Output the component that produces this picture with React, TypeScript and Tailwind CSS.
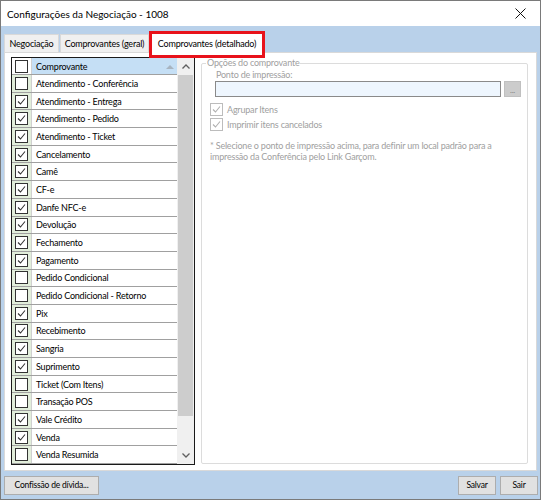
import React from 'react';

const rows: { label: string; checked: boolean }[] = [
  { label: 'Atendimento - Conferência', checked: false },
  { label: 'Atendimento - Entrega', checked: true },
  { label: 'Atendimento - Pedido', checked: true },
  { label: 'Atendimento - Ticket', checked: true },
  { label: 'Cancelamento', checked: true },
  { label: 'Camê', checked: true },
  { label: 'CF-e', checked: true },
  { label: 'Danfe NFC-e', checked: true },
  { label: 'Devolução', checked: true },
  { label: 'Fechamento', checked: true },
  { label: 'Pagamento', checked: true },
  { label: 'Pedido Condicional', checked: false },
  { label: 'Pedido Condicional - Retorno', checked: false },
  { label: 'Pix', checked: true },
  { label: 'Recebimento', checked: true },
  { label: 'Sangria', checked: true },
  { label: 'Suprimento', checked: true },
  { label: 'Ticket (Com Itens)', checked: false },
  { label: 'Transação POS', checked: false },
  { label: 'Vale Crédito', checked: true },
  { label: 'Venda', checked: true },
  { label: 'Venda Resumida', checked: false },
];

const CheckBox = ({ checked, disabled }: { checked: boolean; disabled?: boolean }) => (
  <div
    className={`w-[13px] h-[13px] border flex items-center justify-center ${
      disabled ? 'border-[#bcbcbc] bg-white' : 'border-[#333333] bg-white'
    }`}
  >
    {checked && (
      <svg width="9" height="9" viewBox="0 0 9 9">
        <path
          d="M1 4.5 L3.5 7 L8 1.5"
          fill="none"
          stroke={disabled ? '#b0b0b0' : '#333333'}
          strokeWidth="1.1"
        />
      </svg>
    )}
  </div>
);

const WinButton = ({ children, className = '' }: { children: React.ReactNode; className?: string }) => (
  <button
    className={`h-[19px] bg-[#e1e1e1] border border-[#adadad] text-[8.5px] text-black whitespace-nowrap flex items-center justify-center ${className}`}
  >
    {children}
  </button>
);

export default function App() {
  return (
    <div
      className="w-[541px] h-[500px] border border-[#7a7a7a] flex flex-col bg-white text-black text-[9px] tracking-[-0.2px] leading-none"
      style={{ fontFamily: 'Lato, "Noto Sans", sans-serif' }}
    >
      {/* Title bar */}
      <div className="h-[25px] bg-white flex items-center justify-between pl-[6px] pr-[14px]">
        <span className="text-[10px] tracking-normal">Configurações da Negociação - 1008</span>
        <svg width="11" height="11" viewBox="0 0 11 11">
          <path d="M0.5 0.5 L10.5 10.5 M10.5 0.5 L0.5 10.5" stroke="#111" strokeWidth="1" />
        </svg>
      </div>

      <div className="flex-1 bg-[#b9d1ea] flex flex-col">
        {/* Tabs */}
        <div className="h-[26px] flex items-end pl-[3px]">
          <div className="h-[18px] w-[55px] bg-[#f0f0f0] border border-b-0 border-[#d9d9d9] flex items-center justify-center whitespace-nowrap">
            Negociação
          </div>
          <div className="h-[18px] w-[89px] ml-[1px] bg-[#f0f0f0] border border-b-0 border-[#d9d9d9] flex items-center justify-center whitespace-nowrap">
            Comprovantes (geral)
          </div>
          <div className="relative z-10 -mb-[6px] h-[27px] w-[116px] border-[3px] border-[#e8121b] bg-white flex items-start justify-center pt-[5px] whitespace-nowrap">
            Comprovantes (detalhado)
          </div>
        </div>

        {/* Tab page */}
        <div className="h-[419px] mx-[3px] bg-white border border-[#d9d9d9] flex pt-[4px] pl-[6px] pr-[8px]">
          {/* List */}
          <div className="w-[184px] h-[408px] border border-[#1a1a1a] flex">
            <div className="flex-1 flex flex-col">
              <div className="h-[17px] flex border-b border-[#a0a0a0]">
                <div className="w-[20px] bg-white border-r border-[#d0d0d0] flex items-center justify-center">
                  <CheckBox checked={false} />
                </div>
                <div className="flex-1 bg-[#c5dff5] flex items-center justify-between pl-[4px] pr-[3px]">
                  <span>Comprovante</span>
                  <svg width="8" height="5" viewBox="0 0 8 5">
                    <path d="M0 5 L4 1 L8 5 Z" fill="#a8b4c0" />
                  </svg>
                </div>
              </div>
              {rows.map((r) => (
                <div key={r.label} className="h-[17.7px] flex border-b border-[#a0a0a0]">
                  <div className="w-[20px] bg-[#e2eedb] border-r border-[#d0d0d0] flex items-center justify-center">
                    <CheckBox checked={r.checked} />
                  </div>
                  <div className="flex-1 flex items-center pl-[4px] whitespace-nowrap overflow-hidden">
                    {r.label}
                  </div>
                </div>
              ))}
            </div>
            {/* Scrollbar */}
            <div className="w-[17px] flex flex-col bg-[#f0f0f0]">
              <div className="h-[17px] flex items-center justify-center">
                <svg width="8" height="5" viewBox="0 0 8 5">
                  <path d="M0.5 4.5 L4 1 L7.5 4.5" fill="none" stroke="#606060" strokeWidth="1.3" />
                </svg>
              </div>
              <div className="h-[341px] mx-[1px] bg-[#cdcdcd]" />
              <div className="flex-1" />
              <div className="h-[17px] flex items-center justify-center">
                <svg width="8" height="5" viewBox="0 0 8 5">
                  <path d="M0.5 0.5 L4 4 L7.5 0.5" fill="none" stroke="#606060" strokeWidth="1.3" />
                </svg>
              </div>
            </div>
          </div>

          {/* Group box */}
          <div className="relative flex-1 ml-[6px] mt-[6px] h-[401px] border border-[#dcdcdc] rounded-[2px] text-[#a0a0a0]">
            <span className="absolute -top-[7px] left-[4px] bg-white px-[1px] leading-[12px] whitespace-nowrap">
              Opções do comprovante
            </span>
            <div className="pl-[14px] pt-[5px] leading-[12px]">Ponto de impressão:</div>
            <div className="flex items-center pl-[13px]">
              <div className="w-[286px] h-[16px] bg-[#eef6fe] border border-[#8a8a8a]" />
              <div className="ml-[3px] w-[17px] h-[16px] bg-[#cccccc] border border-[#c0c0c0] flex items-end justify-center text-[8px] leading-[11px] text-[#808080]">
                ...
              </div>
            </div>
            <div className="flex items-center pl-[8px] mt-[6px] h-[13px]">
              <CheckBox checked disabled />
              <span className="ml-[4px]">Agrupar Itens</span>
            </div>
            <div className="flex items-center pl-[8px] mt-[2px] h-[13px]">
              <CheckBox checked disabled />
              <span className="ml-[4px]">Imprimir itens cancelados</span>
            </div>
            <div className="pl-[8px] mt-[9px] leading-[11px] whitespace-nowrap">
              * Selecione o ponto de impressão acima, para definir um local padrão para a
              <br />
              impressão da Conferência pelo Link Garçom.
            </div>
          </div>
        </div>

        {/* Footer */}
        <div className="flex-1 flex items-center justify-between pl-[3px] pr-[2px]">
          <WinButton className="w-[95px]">Confissão de dívida...</WinButton>
          <div className="flex gap-[4px]">
            <WinButton className="w-[38px]">Salvar</WinButton>
            <WinButton className="w-[38px]">Sair</WinButton>
          </div>
        </div>
      </div>
    </div>
  );
}
